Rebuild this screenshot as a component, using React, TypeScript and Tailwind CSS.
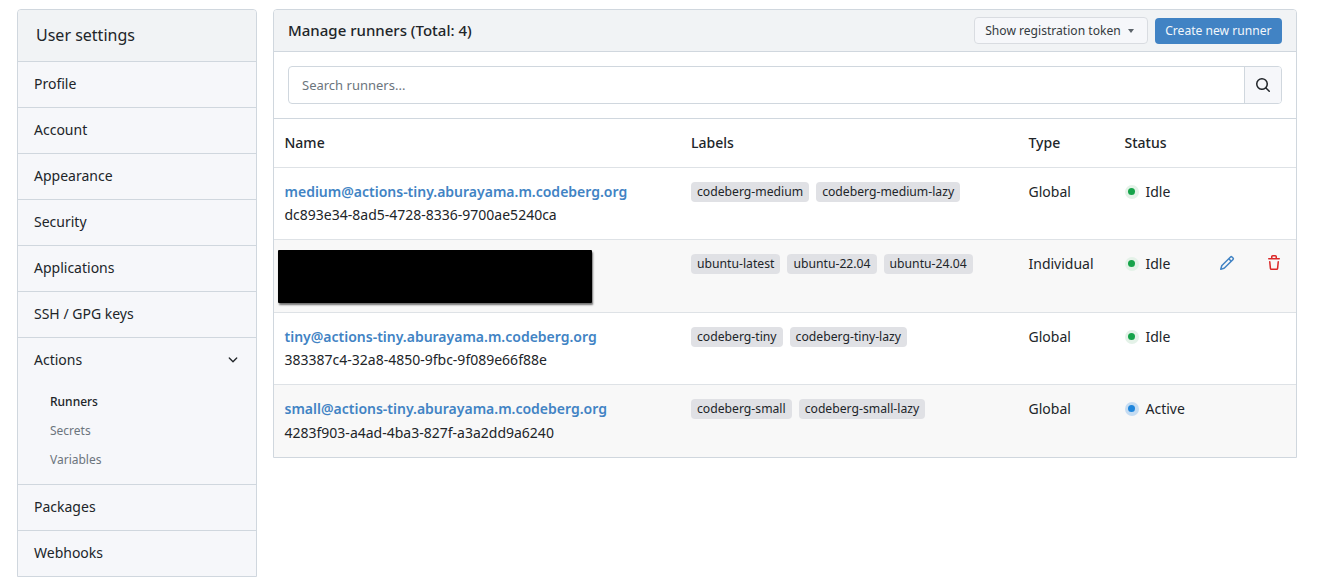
const font = "[font-family:'Noto_Sans',sans-serif]";

function Icon({ d, className }: { d: string; className: string }) {
  return (
    <svg viewBox="0 0 16 16" fill="currentColor" className={className}>
      <path d={d} />
    </svg>
  );
}

const PENCIL = "M11.013 1.427a1.75 1.75 0 0 1 2.474 0l1.086 1.086a1.75 1.75 0 0 1 0 2.474l-8.61 8.61c-.21.21-.47.364-.756.445l-3.251.93a.75.75 0 0 1-.927-.928l.929-3.25c.081-.286.235-.547.445-.758l8.61-8.61Zm.176 4.823L9.75 4.81l-6.286 6.287a.253.253 0 0 0-.064.108l-.558 1.953 1.953-.558a.253.253 0 0 0 .108-.064Zm1.238-3.763a.25.25 0 0 0-.354 0L10.811 3.75l1.439 1.44 1.263-1.263a.25.25 0 0 0 0-.354Z";
const TRASH = "M11 1.75V3h2.25a.75.75 0 0 1 0 1.5H2.75a.75.75 0 0 1 0-1.5H5V1.75C5 .784 5.784 0 6.75 0h2.5C10.216 0 11 .784 11 1.75ZM4.496 6.675l.66 6.6a.25.25 0 0 0 .249.225h5.19a.25.25 0 0 0 .249-.225l.66-6.6a.75.75 0 0 1 1.492.149l-.66 6.6A1.748 1.748 0 0 1 10.595 15h-5.19a1.75 1.75 0 0 1-1.741-1.575l-.66-6.6a.75.75 0 1 1 1.492-.15ZM6.5 1.75V3h3V1.75a.25.25 0 0 0-.25-.25h-2.5a.25.25 0 0 0-.25.25Z";
const SEARCH = "M10.68 11.74a6 6 0 0 1-7.922-8.982 6 6 0 0 1 8.982 7.922l3.04 3.04a.749.749 0 0 1-.326 1.275.749.749 0 0 1-.734-.215ZM11.5 7a4.499 4.499 0 1 0-8.997 0A4.499 4.499 0 0 0 11.5 7Z";
const CHEVRON = "M12.78 5.22a.749.749 0 0 1 0 1.06l-4.25 4.25a.749.749 0 0 1-1.06 0L3.22 6.28a.749.749 0 1 1 1.06-1.06L8 8.939l3.72-3.719a.749.749 0 0 1 1.06 0Z";

function NavRow({ label }: { label: string }) {
  return (
    <div className="h-[46px] border-t border-[#d0d7de] flex items-center pl-4 pb-[2px] text-[14px] text-[#212529]">
      {label}
    </div>
  );
}

function Sidebar() {
  return (
    <aside className="w-[240px] shrink-0 border border-[#d0d7de] rounded-t-[4px] bg-[#f6f7fa] overflow-hidden">
      <div className="h-[51px] bg-[#f1f3f5] flex items-center pl-[18px] pb-[2px] text-[16px] font-normal text-[#212529]">
        User settings
      </div>
      {["Profile", "Account", "Appearance", "Security", "Applications", "SSH / GPG keys"].map((l) => (
        <NavRow key={l} label={l} />
      ))}
      <div className="h-[147px] border-t border-[#d0d7de]">
        <div className="h-[43px] flex items-center justify-between pl-4 pr-4 text-[14px] text-[#212529]">
          <span>Actions</span>
          <Icon d={CHEVRON} className="w-[14px] h-[14px] text-[#212529]" />
        </div>
        <div className="pl-8 pt-[6px] text-[12px] flex flex-col">
          <div className="h-[29px] flex items-center font-medium text-[#212529]">Runners</div>
          <div className="h-[29px] flex items-center text-[#6c757d]">Secrets</div>
          <div className="h-[29px] flex items-center text-[#6c757d]">Variables</div>
        </div>
      </div>
      <NavRow label="Packages" />
      <NavRow label="Webhooks" />
    </aside>
  );
}

function Label({ text }: { text: string }) {
  return (
    <span className="inline-flex items-center h-[19.5px] px-[6px] rounded-[4px] bg-[#e0e1e5] text-[12.2px] text-[#212529] leading-none">
      {text}
    </span>
  );
}

function Status({ kind }: { kind: "idle" | "active" }) {
  const active = kind === "active";
  return (
    <div className="flex items-center gap-[7px]">
      <span
        className={
          active
            ? "w-[14px] h-[14px] rounded-full bg-[#c5dcf2] flex items-center justify-center"
            : "w-[14px] h-[14px] rounded-full bg-[#e4f2e8] flex items-center justify-center"
        }
      >
        <span
          className={
            active ? "w-[7px] h-[7px] rounded-full bg-[#1f86dc]" : "w-[7px] h-[7px] rounded-full bg-[#16a34a]"
          }
        />
      </span>
      <span>{active ? "Active" : "Idle"}</span>
    </div>
  );
}

type Runner = {
  name?: string;
  id?: string;
  labels: string[];
  type: string;
  status: "idle" | "active";
  actions?: boolean;
};

const runners: Runner[] = [
  {
    name: "medium@actions-tiny.aburayama.m.codeberg.org",
    id: "dc893e34-8ad5-4728-8336-9700ae5240ca",
    labels: ["codeberg-medium", "codeberg-medium-lazy"],
    type: "Global",
    status: "idle",
  },
  {
    labels: ["ubuntu-latest", "ubuntu-22.04", "ubuntu-24.04"],
    type: "Individual",
    status: "idle",
    actions: true,
  },
  {
    name: "tiny@actions-tiny.aburayama.m.codeberg.org",
    id: "383387c4-32a8-4850-9fbc-9f089e66f88e",
    labels: ["codeberg-tiny", "codeberg-tiny-lazy"],
    type: "Global",
    status: "idle",
  },
  {
    name: "small@actions-tiny.aburayama.m.codeberg.org",
    id: "4283f903-a4ad-4ba3-827f-a3a2dd9a6240",
    labels: ["codeberg-small", "codeberg-small-lazy"],
    type: "Global",
    status: "active",
  },
];

function Main() {
  return (
    <main className="w-[1024px] shrink-0 self-start border border-[#d0d7de] rounded-t-[4px] overflow-hidden text-[14px] text-[#212529]">
      <div className="h-[41px] bg-[#f1f3f5] flex items-center justify-between pl-[14px] pr-[14px] text-[15px] font-medium">
        <span>Manage runners (Total: 4)</span>
        <div className="flex items-center gap-[7px]">
          <button className="h-[27px] pl-[10px] pr-[13px] pt-[1px] flex items-center gap-[7px] rounded-[4px] border border-[#d9dce1] bg-[#f6f7fa] text-[12.1px] font-normal text-[#343a40]">
            Show registration token
            <span className="w-0 h-0 border-x-[3.5px] border-x-transparent border-t-[4px] border-t-[#5c636a]" />
          </button>
          <button className="h-[26px] px-[10.5px] pt-[1px] flex items-center rounded-[4px] bg-[#4183c4] text-[12.1px] font-normal text-[#f3f7fb]">
            Create new runner
          </button>
        </div>
      </div>
      <div className="h-[67px] border-t border-[#d0d7de] flex items-center px-[14px]">
        <div className="flex w-full h-[38px] rounded-[4px] border border-[#d0d7de] overflow-hidden">
          <div className="flex-1 flex items-center pl-[13px] pt-[1px] text-[13px] text-[#6c757d] font-normal">
            Search runners...
          </div>
          <div className="w-[37px] border-l border-[#d0d7de] bg-[#f6f7fa] flex items-center justify-center">
            <Icon d={SEARCH} className="w-[16px] h-[16px] text-[#212529]" />
          </div>
        </div>
      </div>
      <table className="w-full table-fixed border-collapse">
        <colgroup>
          <col className="w-[406px]" />
          <col className="w-[338px]" />
          <col className="w-[96px]" />
          <col className="w-[95px]" />
          <col />
        </colgroup>
        <thead>
          <tr className="h-[49px] border-t border-[#d0d7de] text-left">
            {["Name", "Labels", "Type", "Status", ""].map((h, i) => (
              <th key={i} className={i === 1 ? "pl-[11px] pb-[2px] font-medium" : "pl-[10.5px] pb-[2px] font-medium"}>
                {h}
              </th>
            ))}
          </tr>
        </thead>
        <tbody>
          {runners.map((r, i) => (
            <tr
              key={i}
              className={
                i === 1
                  ? "h-[73px] border-t border-[#dee2e6] bg-[#f8f8f8]"
                  : i === 3
                    ? "h-[72px] border-t border-[#dee2e6] bg-[#f8f8f8]"
                    : "h-[72px] border-t border-[#dee2e6]"
              }
            >
              <td className="relative pl-[10.5px] pt-[12px] align-top">
                {r.name ? (
                  <>
                    <div className="font-semibold text-[#4183c4] leading-[23px]">{r.name}</div>
                    <div className={i === 3 ? "mt-[1px] leading-[23px]" : "leading-[23px]"}>{r.id}</div>
                  </>
                ) : (
                  <div className="absolute left-[4px] top-[10px] w-[314px] h-[53px] bg-black rounded-[1px] shadow-[1px_2px_2px_rgba(0,0,0,0.55)]" />
                )}
              </td>
              <td className="pl-[11px] pt-[14px] align-top">
                <div className="flex gap-[7px]">
                  {r.labels.map((l) => (
                    <Label key={l} text={l} />
                  ))}
                </div>
              </td>
              <td className="pl-[10.5px] pt-[12px] align-top leading-[23px]">{r.type}</td>
              <td className="pl-[10.5px] pt-[12px] align-top leading-[23px]">
                <Status kind={r.status} />
              </td>
              <td className="pl-[10px] pt-[15px] align-top">
                {r.actions && (
                  <div className="flex gap-[31px]">
                    <Icon d={PENCIL} className="w-[16px] h-[16px] text-[#4183c4]" />
                    <Icon d={TRASH} className="w-[16px] h-[16px] text-[#db2828]" />
                  </div>
                )}
              </td>
            </tr>
          ))}
        </tbody>
      </table>
    </main>
  );
}

export default function App() {
  return (
    <div className={`${font} flex gap-4 pl-[17px] pt-[9px] bg-white min-h-[577px]`}>
      <Sidebar />
      <Main />
    </div>
  );
}
